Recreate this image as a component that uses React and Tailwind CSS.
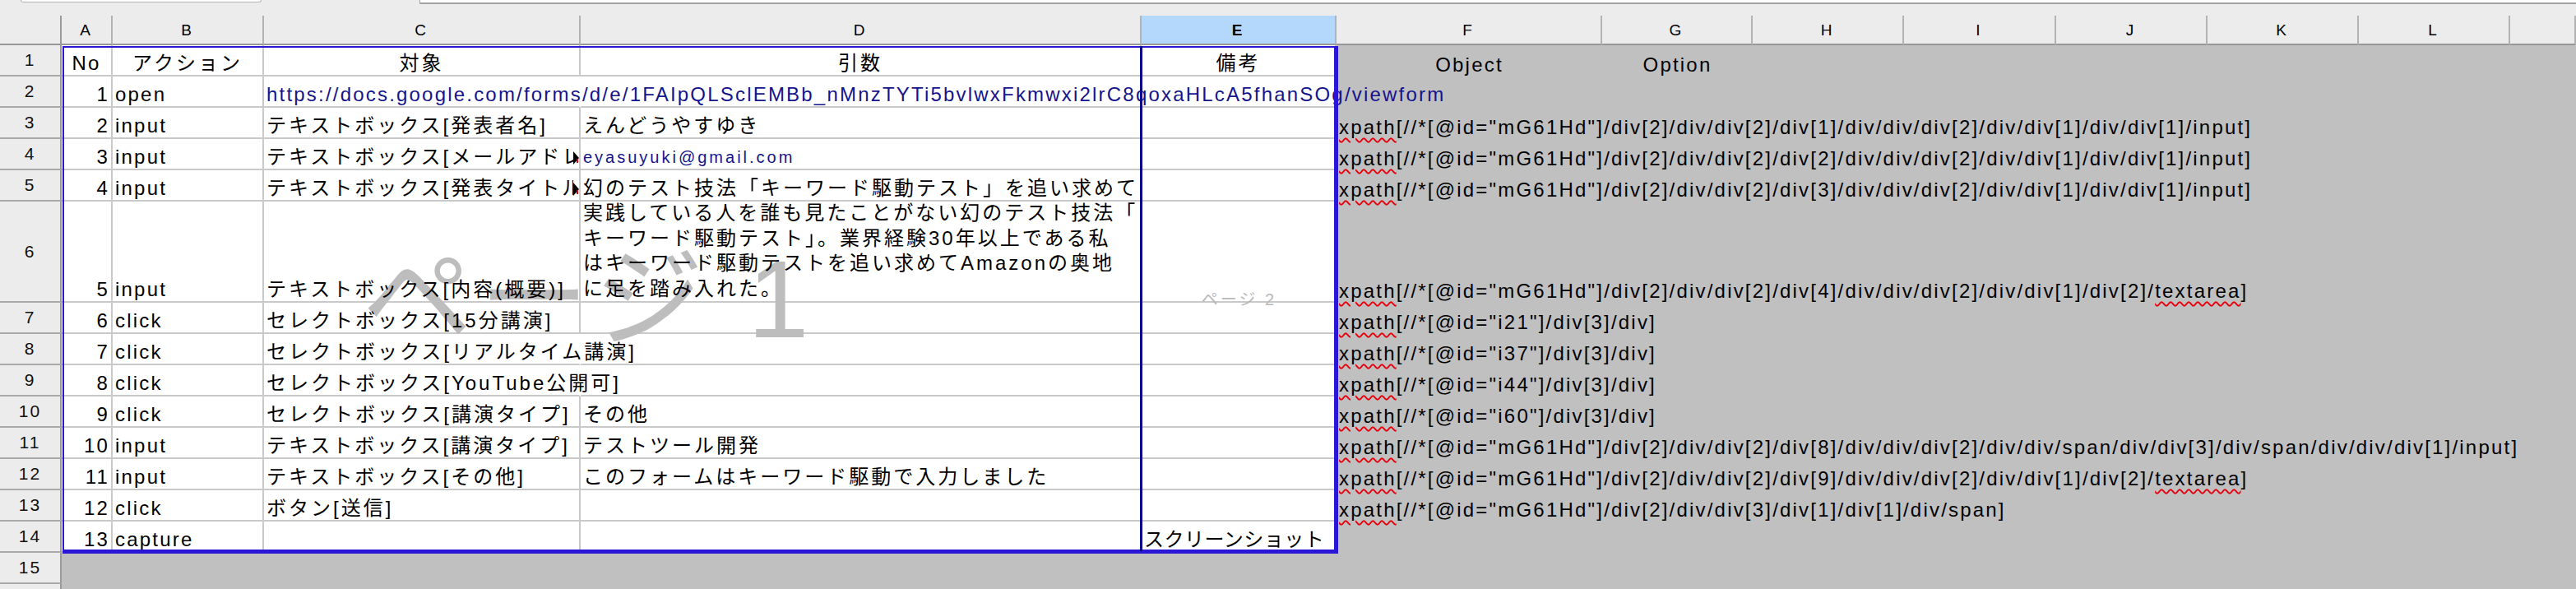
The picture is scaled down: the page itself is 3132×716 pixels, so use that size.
import React from "react";

// Excel page-break preview of a keyword-driven test sheet
const FONT = "[font-family:'Liberation_Sans','Noto_Sans_CJK_JP',sans-serif]";
const GRID_COLS =
  "grid-cols-[75px_62px_184px_385px_682px_237px_323px_183px_184px_185px_184px_184px_184px_80px]";
const GRID_ROWS = "grid-rows-[36px_repeat(5,38px)_123px_repeat(10,38px)]";
const LETTERS = ["A", "B", "C", "D", "E", "F", "G", "H", "I", "J", "K", "L", ""];
const KEYS = ["A", "B", "C", "D", "E", "F", "G", "H", "I", "J", "K", "L", "M"];

const URL =
  "https://docs.google.com/forms/d/e/1FAIpQLSclEMBb_nMnzTYTi5bvlwxFkmwxi2lrC8qoxaHLcA5fhanSOg/viewform";

const KIND = {
  lat: "text-[24px] tracking-[2.2px]",
  cjk: "text-[24px] tracking-[3px]",
  tight: "text-[24px] tracking-[0.5px]",
  link: "text-[24px] tracking-[2.2px] text-[#14148c]",
  mail: "text-[20px] tracking-[3px] text-[#14148c]",
};
const ALIGN = {
  l: "justify-start pl-[3px]",
  c: "justify-center",
  r: "justify-end pr-[2px]",
};

const L = (t, a = "l", x = {}) => ({ t, a, k: "lat", ...x });
const J = (t, a = "l", x = {}) => ({ t, a, k: "cjk", ...x });
const N = (t) => ({ t, a: "r", k: "lat" });
const X = (path) => ({ t: <XPath path={path} />, a: "l", k: "lat" });

function Squiggle({ children }) {
  return (
    <span className="underline decoration-red-600 decoration-wavy decoration-[1.5px] underline-offset-[4px]">
      {children}
    </span>
  );
}

function XPath({ path }) {
  const [head, tail] = path.split("textarea");
  return (
    <>
      <Squiggle>xpath</Squiggle>
      {head}
      {tail !== undefined && (
        <>
          <Squiggle>textarea</Squiggle>
          {tail}
        </>
      )}
    </>
  );
}

const ROWS = [
  {
    n: "1",
    c: {
      A: L("No", "c"),
      B: J("アクション", "c"),
      C: J("対象", "c"),
      D: J("引数", "c"),
      E: J("備考", "c"),
      F: L("Object", "c"),
      G: L("Option", "c"),
    },
  },
  {
    n: "2",
    c: {
      A: N("1"),
      B: L("open"),
      C: { t: URL, a: "l", k: "link", over: true },
      D: { over: true },
    },
  },
  {
    n: "3",
    c: {
      A: N("2"),
      B: L("input"),
      C: J("テキストボックス[発表者名]"),
      D: J("えんどうやすゆき"),
      F: X('[//*[@id="mG61Hd"]/div[2]/div/div[2]/div[1]/div/div/div[2]/div/div[1]/div/div[1]/input]'),
    },
  },
  {
    n: "4",
    c: {
      A: N("3"),
      B: L("input"),
      C: J("テキストボックス[メールアドレス]", "l", { clip: true }),
      D: { t: "eyasuyuki@gmail.com", a: "l", k: "mail" },
      F: X('[//*[@id="mG61Hd"]/div[2]/div/div[2]/div[2]/div/div/div[2]/div/div[1]/div/div[1]/input]'),
    },
  },
  {
    n: "5",
    c: {
      A: N("4"),
      B: L("input"),
      C: J("テキストボックス[発表タイトル]", "l", { clip: true }),
      D: J("幻のテスト技法「キーワード駆動テスト」を追い求めて"),
      F: X('[//*[@id="mG61Hd"]/div[2]/div/div[2]/div[3]/div/div/div[2]/div/div[1]/div/div[1]/input]'),
    },
  },
  {
    n: "6",
    c: {
      A: N("5"),
      B: L("input"),
      C: J("テキストボックス[内容(概要)]"),
      D: {
        a: "l",
        k: "cjk",
        lines: [
          "実践している人を誰も見たことがない幻のテスト技法「",
          "キーワード駆動テスト」。業界経験30年以上である私",
          "はキーワード駆動テストを追い求めてAmazonの奥地",
          "に足を踏み入れた。",
        ],
      },
      F: X('[//*[@id="mG61Hd"]/div[2]/div/div[2]/div[4]/div/div/div[2]/div/div[1]/div[2]/textarea]'),
    },
  },
  {
    n: "7",
    c: {
      A: N("6"),
      B: L("click"),
      C: J("セレクトボックス[15分講演]"),
      F: X('[//*[@id="i21"]/div[3]/div]'),
    },
  },
  {
    n: "8",
    c: {
      A: N("7"),
      B: L("click"),
      C: J("セレクトボックス[リアルタイム講演]", "l", { over: true }),
      F: X('[//*[@id="i37"]/div[3]/div]'),
    },
  },
  {
    n: "9",
    c: {
      A: N("8"),
      B: L("click"),
      C: J("セレクトボックス[YouTube公開可]", "l", { over: true }),
      F: X('[//*[@id="i44"]/div[3]/div]'),
    },
  },
  {
    n: "10",
    c: {
      A: N("9"),
      B: L("click"),
      C: J("セレクトボックス[講演タイプ]"),
      D: J("その他"),
      F: X('[//*[@id="i60"]/div[3]/div]'),
    },
  },
  {
    n: "11",
    c: {
      A: N("10"),
      B: L("input"),
      C: J("テキストボックス[講演タイプ]"),
      D: J("テストツール開発"),
      F: X('[//*[@id="mG61Hd"]/div[2]/div/div[2]/div[8]/div/div/div[2]/div/div/span/div/div[3]/div/span/div/div/div[1]/input]'),
    },
  },
  {
    n: "12",
    c: {
      A: N("11"),
      B: L("input"),
      C: J("テキストボックス[その他]"),
      D: J("このフォームはキーワード駆動で入力しました"),
      F: X('[//*[@id="mG61Hd"]/div[2]/div/div[2]/div[9]/div/div/div[2]/div/div[1]/div[2]/textarea]'),
    },
  },
  {
    n: "13",
    c: {
      A: N("12"),
      B: L("click"),
      C: J("ボタン[送信]"),
      F: X('[//*[@id="mG61Hd"]/div[2]/div/div[3]/div[1]/div[1]/div/span]'),
    },
  },
  {
    n: "14",
    c: {
      A: N("13"),
      B: L("capture"),
      E: { t: "スクリーンショット", a: "l", k: "tight" },
    },
  },
];

function Cell({ spec, white }) {
  const frame = white
    ? `bg-white border-b-2 border-r-2 border-b-[#c9c9c9] ${
        spec?.over ? "border-r-transparent" : "border-r-[#c9c9c9]"
      }`
    : "bg-[#c0c0c0]";

  if (!spec || (spec.t == null && !spec.lines)) return <div className={frame} />;

  const text = `relative z-10 whitespace-nowrap leading-[28px] ${KIND[spec.k]}`;
  let body;
  if (spec.lines) {
    body = (
      <span className={`relative z-10 whitespace-nowrap leading-[30.5px] ${KIND.cjk}`}>
        {spec.lines.map((line, i) => (
          <React.Fragment key={i}>
            {i > 0 && <br />}
            {line}
          </React.Fragment>
        ))}
      </span>
    );
  } else if (spec.clip) {
    body = (
      <>
        <span className={`${text} min-w-0 flex-1 overflow-hidden`}>{spec.t}</span>
        <span className="relative z-10 mb-[5px] h-0 w-0 border-y-[8px] border-l-[7px] border-y-transparent border-l-black">
          <span className="absolute left-[-3px] top-[1px] h-[5px] w-[2px] bg-red-600" />
        </span>
      </>
    );
  } else {
    body = <span className={text}>{spec.t}</span>;
  }

  return <div className={`flex items-end ${ALIGN[spec.a]} ${frame}`}>{body}</div>;
}

function RowHead({ n }) {
  return (
    <div className="flex items-center justify-center border-b-2 border-r-2 border-b-[#a9a9a9] border-r-[#9a9a9a] bg-[#ececec] text-[21px] tracking-[2px] text-[#111]">
      {n}
    </div>
  );
}

export default function App() {
  return (
    <div className={`relative h-[716px] w-[3132px] overflow-hidden bg-[#ececec] text-black ${FONT}`}>
      {/* name box / formula bar remnants */}
      <div className="flex h-[19px] items-start">
        <div className="ml-[25px] h-[3px] w-[293px] rounded-b-[5px] border-x border-b border-[#b5b5b5] bg-white" />
        <div className="ml-[192px] h-[5px] flex-1 border-b-2 border-l border-[#a3a3a3] bg-white" />
      </div>

      <div className={`grid ${GRID_COLS} ${GRID_ROWS}`}>
        {/* column headers */}
        <div className="border-b-2 border-r-2 border-b-[#979797] border-r-[#9a9a9a] bg-[#ececec]" />
        {LETTERS.map((letter, i) => (
          <div
            key={i}
            className={`flex items-center justify-center border-b-2 border-r-2 border-b-[#979797] border-r-[#b3b3b3] pt-[3px] text-[19px] tracking-[3px] ${
              letter === "E" ? "bg-[#b4d7fc] font-bold" : "bg-[#ececec]"
            }`}
          >
            {letter}
          </div>
        ))}

        {/* sheet rows */}
        {ROWS.map((row) => (
          <React.Fragment key={row.n}>
            <RowHead n={row.n} />
            {KEYS.map((key, i) => (
              <Cell key={key} spec={row.c[key]} white={i < 5} />
            ))}
          </React.Fragment>
        ))}

        {/* rows outside the print area */}
        {["15", "16"].map((n) => (
          <React.Fragment key={n}>
            <RowHead n={n} />
            {KEYS.map((key) => (
              <Cell key={key} white={false} />
            ))}
          </React.Fragment>
        ))}
      </div>

      {/* page watermarks */}
      <div className="pointer-events-none absolute left-[76px] top-[56px] z-[1] flex h-[615px] w-[1310px] items-center justify-center pr-[30px]">
        <span className="whitespace-nowrap text-[134px] leading-none tracking-[8px] text-[#bdbdbd]">
          ページ 1
        </span>
      </div>
      <div className="pointer-events-none absolute left-[1388px] top-[56px] z-[1] flex h-[615px] w-[237px] items-center justify-center">
        <span className="whitespace-nowrap text-[20px] leading-none tracking-[3px] text-[#b9b9b9]">
          ページ 2
        </span>
      </div>

      {/* print area frame and page break */}
      <div className="pointer-events-none absolute left-[76px] top-[56px] z-20 h-[617px] w-[1551px] border-b-[5px] border-l-2 border-r-[5px] border-t-2 border-[#2a16d6]" />
      <div className="pointer-events-none absolute left-[1386px] top-[56px] z-20 h-[614px] w-[3px] bg-[#0b0b8a]" />
    </div>
  );
}
